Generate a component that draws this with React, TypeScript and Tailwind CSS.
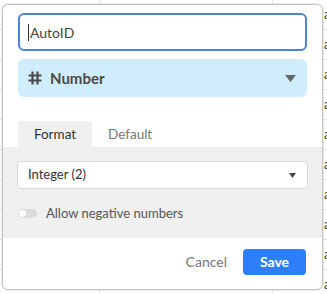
import React from "react";

const rows = Array.from({ length: 10 });

function Grid() {
  return (
    <div className="absolute inset-0 bg-white">
      {rows.map((_, i) => (
        <div
          key={i}
          className="grid h-[30px] grid-cols-[100px_173px_1fr] border-b border-[#e6e6e6] text-[13px] text-[#333]"
        >
          <div className="border-r border-[#e6e6e6]" />
          <div className="border-r border-[#e6e6e6]" />
          <div className="flex items-center pl-[51px]">a</div>
        </div>
      ))}
    </div>
  );
}

function Toggle() {
  return (
    <div className="flex h-[9px] w-[19px] items-center rounded-full bg-[#dcdcdc] p-[1px]">
      <div className="h-[7px] w-[7px] rounded-full bg-white" />
    </div>
  );
}

export default function App() {
  return (
    <div
      className="relative h-[294px] w-[327px] overflow-hidden"
      style={{ fontFamily: "Lato, 'Noto Sans', sans-serif" }}
    >
      <Grid />
      <div className="absolute left-[2px] top-[4px] flex h-[286px] w-[321px] flex-col rounded-[6px] border border-[#c4c4c4] bg-white shadow-[0_0_0_1px_rgba(0,0,0,0.08)]">
        <div className="px-[15px] pt-[8px]">
          <div className="flex h-[38px] items-center rounded-[6px] border-2 border-[#4b86d8] pl-[8px] text-[14px] text-[#444]">
            <span className="mr-[1px] h-[17px] w-px bg-[#333]" />
            AutoID
          </div>
          <div className="mt-[8px] flex h-[38px] items-center rounded-[6px] bg-[#d0edfb] px-[9px]">
            <svg width="14" height="14" viewBox="0 0 14 14" className="ml-[1px]">
              <path d="M4.5 0.5v13M9.5 0.5v13M0.5 4.5h13M0.5 9.5h13" stroke="#4a4a4a" strokeWidth="2.2" fill="none" />
            </svg>
            <span className="ml-[8px] text-[15px] font-bold text-[#4a4a4a]">Number</span>
            <svg className="ml-auto mr-[2px]" width="11" height="7" viewBox="0 0 11 7">
              <path d="M0 0h11L5.5 7z" fill="#666" />
            </svg>
          </div>
        </div>

        <div className="mt-[24px] flex px-[15px] text-[13.5px]">
          <div className="flex h-[26px] w-[74px] items-center justify-center rounded-t-[3px] bg-[#f0f0f0] text-[#333]">
            Format
          </div>
          <div className="flex h-[26px] items-center px-[16px] text-[#777]">Default</div>
        </div>

        <div className="flex h-[91px] flex-col bg-[#f0f0f0] px-[14px] pt-[14px]">
          <div className="flex h-[28px] items-center rounded-[4px] border border-[#d8d8d8] bg-white pl-[10px] pr-[11px] text-[13px] text-[#333]">
            Integer (2)
            <svg className="ml-auto" width="7" height="5" viewBox="0 0 7 5">
              <path d="M0 0h7L3.5 5z" fill="#444" />
            </svg>
          </div>
          <div className="mt-[15px] flex items-center pl-[1px] text-[13px] text-[#555]">
            <Toggle />
            <span className="ml-[9px]">Allow negative numbers</span>
          </div>
        </div>

        <div className="flex flex-1 items-center justify-end px-[16px] pb-[4px]">
          <span className="mr-[16px] text-[14px] text-[#777]">Cancel</span>
          <div className="flex h-[26px] w-[63px] items-center justify-center rounded-[4px] bg-[#2d7ff9] text-[14px] font-bold text-white">
            Save
          </div>
        </div>
      </div>
    </div>
  );
}
